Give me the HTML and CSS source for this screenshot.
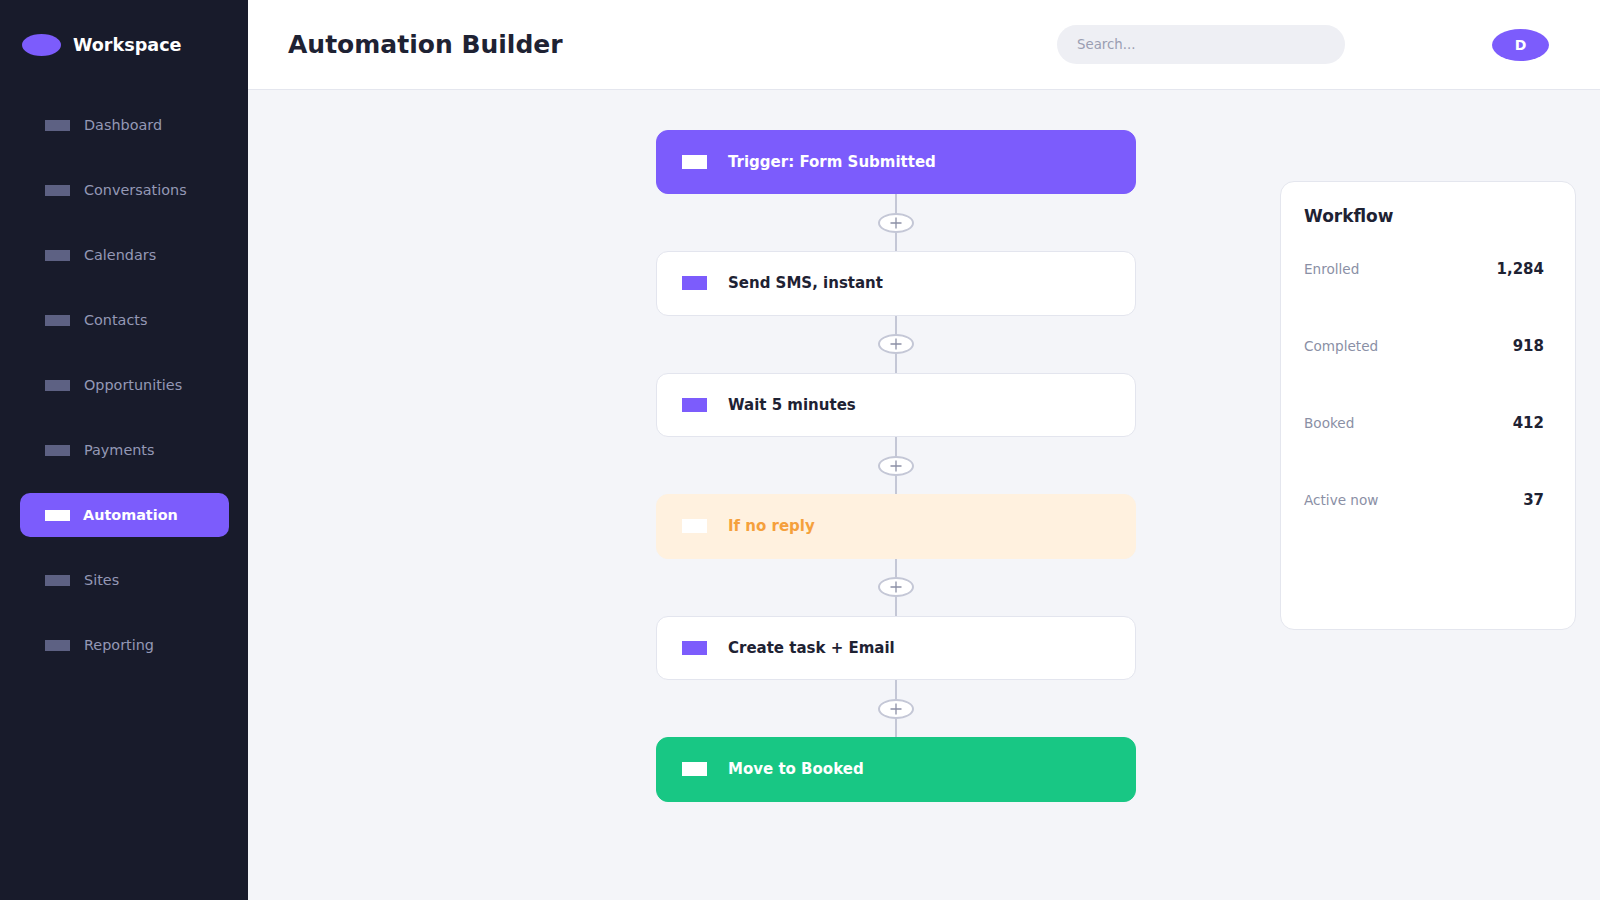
FILE: index.html
```html
<!DOCTYPE html>
<html lang="en">
<head>
<meta charset="utf-8">
<title>Automation Builder</title>
<link rel="stylesheet" href="styles.css">
</head>
<body>
<div class="app">
  <aside class="sidebar">
    <div class="brand">
      <span class="brand-logo"></span>
      <span class="brand-name">Workspace</span>
    </div>
    <nav class="nav">
      <a class="nav-item"><span class="nav-icon"></span>Dashboard</a>
      <a class="nav-item"><span class="nav-icon"></span>Conversations</a>
      <a class="nav-item"><span class="nav-icon"></span>Calendars</a>
      <a class="nav-item"><span class="nav-icon"></span>Contacts</a>
      <a class="nav-item"><span class="nav-icon"></span>Opportunities</a>
      <a class="nav-item"><span class="nav-icon"></span>Payments</a>
      <a class="nav-item active"><span class="nav-icon"></span>Automation</a>
      <a class="nav-item"><span class="nav-icon"></span>Sites</a>
      <a class="nav-item"><span class="nav-icon"></span>Reporting</a>
    </nav>
  </aside>
  <main class="main">
    <header class="topbar">
      <h1 class="title">Automation Builder</h1>
      <input class="search" type="text" placeholder="Search...">
      <div class="avatar">D</div>
    </header>
    <section class="canvas">
      <div class="flow">
        <div class="step step-trigger"><span class="step-icon"></span>Trigger: Form Submitted</div>
        <div class="connector"><span class="line"></span><span class="add"><svg viewBox="0 0 12 12" width="12" height="12"><path d="M6 0.5V11.5M0.5 6H11.5" stroke="#8c90a6" stroke-width="1.3" fill="none"/></svg></span><span class="line"></span></div>
        <div class="step"><span class="step-icon"></span>Send SMS, instant</div>
        <div class="connector"><span class="line"></span><span class="add"><svg viewBox="0 0 12 12" width="12" height="12"><path d="M6 0.5V11.5M0.5 6H11.5" stroke="#8c90a6" stroke-width="1.3" fill="none"/></svg></span><span class="line"></span></div>
        <div class="step"><span class="step-icon"></span>Wait 5 minutes</div>
        <div class="connector"><span class="line"></span><span class="add"><svg viewBox="0 0 12 12" width="12" height="12"><path d="M6 0.5V11.5M0.5 6H11.5" stroke="#8c90a6" stroke-width="1.3" fill="none"/></svg></span><span class="line"></span></div>
        <div class="step step-condition"><span class="step-icon"></span>If no reply</div>
        <div class="connector"><span class="line"></span><span class="add"><svg viewBox="0 0 12 12" width="12" height="12"><path d="M6 0.5V11.5M0.5 6H11.5" stroke="#8c90a6" stroke-width="1.3" fill="none"/></svg></span><span class="line"></span></div>
        <div class="step"><span class="step-icon"></span>Create task + Email</div>
        <div class="connector"><span class="line"></span><span class="add"><svg viewBox="0 0 12 12" width="12" height="12"><path d="M6 0.5V11.5M0.5 6H11.5" stroke="#8c90a6" stroke-width="1.3" fill="none"/></svg></span><span class="line"></span></div>
        <div class="step step-success"><span class="step-icon"></span>Move to Booked</div>
      </div>
      <aside class="panel">
        <h2 class="panel-title">Workflow</h2>
        <div class="stats">
          <div class="stat"><span class="stat-label">Enrolled</span><span class="stat-value">1,284</span></div>
          <div class="stat"><span class="stat-label">Completed</span><span class="stat-value">918</span></div>
          <div class="stat"><span class="stat-label">Booked</span><span class="stat-value">412</span></div>
          <div class="stat"><span class="stat-label">Active now</span><span class="stat-value">37</span></div>
        </div>
      </aside>
    </section>
  </main>
</div>
</body>
</html>
```

FILE: styles.css
```css
* { box-sizing: border-box; }

html, body {
  margin: 0;
  padding: 0;
  height: 100%;
}

body {
  font-family: "DejaVu Sans", "Liberation Sans", sans-serif;
  color: #1e2233;
  background: #f4f5f9;
}

.app {
  display: flex;
  height: 900px;
  overflow: hidden;
}

/* Sidebar */
.sidebar {
  width: 248px;
  flex: 0 0 248px;
  background: #181b2b;
  display: flex;
  flex-direction: column;
}

.brand {
  display: flex;
  align-items: center;
  gap: 12px;
  height: 22px;
  margin: 34px 0 0 22px;
}

.brand-logo {
  width: 39px;
  height: 22px;
  border-radius: 50%;
  background: #7c5cfc;
}

.brand-name {
  color: #ffffff;
  font-weight: 700;
  font-size: 17.6px;
}

.nav {
  display: flex;
  flex-direction: column;
  gap: 21px;
  padding: 0 19px 0 20px;
  margin-top: 47px;
}

.nav-item {
  display: flex;
  align-items: center;
  gap: 14px;
  height: 44px;
  padding-left: 25px;
  border-radius: 10px;
  font-size: 14.4px;
  color: #9498b5;
  text-decoration: none;
}

.nav-icon {
  width: 25px;
  height: 11px;
  background: #5d6183;
}

.nav-item.active {
  background: #7c5cfc;
  color: #ffffff;
  font-weight: 700;
  gap: 13px;
}

.nav-item.active .nav-icon {
  background: #ffffff;
}

/* Main */
.main {
  flex: 1;
  display: flex;
  flex-direction: column;
  min-width: 0;
}

.topbar {
  height: 90px;
  flex: 0 0 90px;
  background: #ffffff;
  border-bottom: 1px solid #e4e6ee;
  display: flex;
  align-items: center;
  padding: 0 51px 0 40px;
}

.title {
  margin: 0;
  font-size: 25px;
  font-weight: 700;
  color: #1e2233;
}

.search {
  margin-left: auto;
  width: 288px;
  height: 39px;
  border: none;
  outline: none;
  border-radius: 20px;
  background: #eeeff4;
  padding: 0 20px;
  font-family: "DejaVu Sans", sans-serif;
  font-size: 13.33px;
  color: #1e2233;
}

.search::placeholder {
  color: #9a9eb2;
}

.avatar {
  margin-left: 147px;
  width: 57px;
  height: 32px;
  border-radius: 50%;
  background: #7c5cfc;
  color: #ffffff;
  font-weight: 700;
  font-size: 14px;
  display: flex;
  align-items: center;
  justify-content: center;
}

/* Canvas */
.canvas {
  flex: 1;
  display: grid;
  grid-template-columns: 1fr 296px;
  column-gap: 24px;
  align-items: start;
  padding: 39.5px 24px 0 288px;
}

.flow {
  display: flex;
  flex-direction: column;
  align-items: center;
}

.step {
  width: 480px;
  height: 64.5px;
  border-radius: 12px;
  background: #ffffff;
  border: 1.5px solid #e3e5ee;
  display: flex;
  align-items: center;
  gap: 21px;
  padding-left: 25px;
  font-size: 15px;
  font-weight: 700;
  color: #1e2233;
}

.step-icon {
  width: 25px;
  height: 14px;
  background: #7c5cfc;
  flex: 0 0 25px;
}

.step-trigger {
  background: #7c5cfc;
  border-color: #7c5cfc;
  color: #ffffff;
}

.step-trigger .step-icon,
.step-success .step-icon,
.step-condition .step-icon {
  background: #ffffff;
}

.step-condition {
  background: #fff1df;
  border-color: #fff1df;
  color: #f5a03c;
}

.step-success {
  background: #18c784;
  border-color: #18c784;
  color: #ffffff;
}

.connector {
  display: flex;
  flex-direction: column;
  align-items: center;
  height: 57px;
}

.line {
  width: 2px;
  flex: 1;
  background: #c4c7d6;
}

.add {
  width: 36px;
  height: 20px;
  border-radius: 50%;
  border: 2px solid #c4c7d6;
  background: #ffffff;
  display: flex;
  align-items: center;
  justify-content: center;
}

.add svg {
  display: block;
}

/* Panel */
.panel {
  margin-top: 51px;
  height: 449px;
  background: #ffffff;
  border: 1.5px solid #e4e6ee;
  border-radius: 14px;
  padding: 24px 31px 24px 23px;
}

.panel-title {
  margin: 0;
  font-size: 17px;
  line-height: 20px;
  font-weight: 700;
  color: #1e2233;
}

.stats {
  display: flex;
  flex-direction: column;
  gap: 57px;
  margin-top: 33px;
}

.stat {
  display: flex;
  justify-content: space-between;
  align-items: center;
  height: 20px;
}

.stat-label {
  font-size: 13.6px;
  color: #8a8fa5;
}

.stat-value {
  font-size: 15px;
  font-weight: 700;
  color: #1e2233;
}
```
